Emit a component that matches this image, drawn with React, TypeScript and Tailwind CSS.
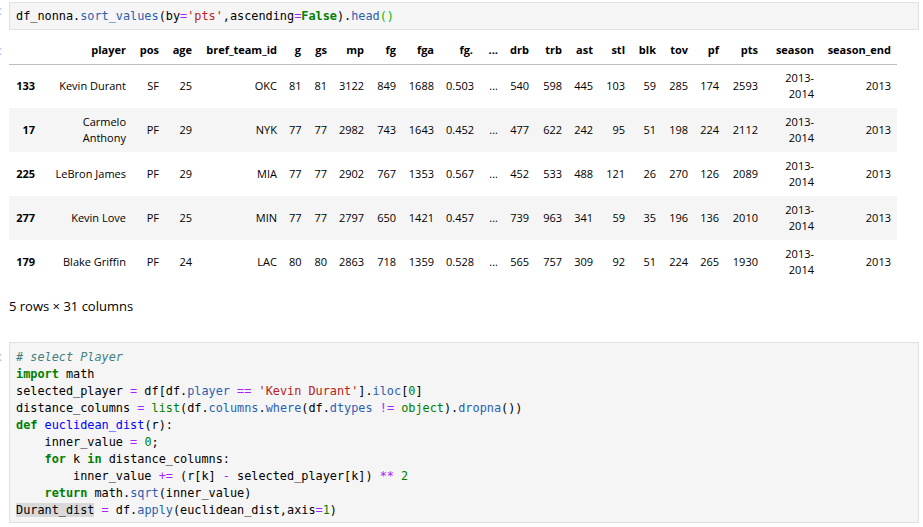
import React from 'react';

const mono = { fontFamily: '"DejaVu Sans Mono", "Liberation Mono", monospace' };

// token helpers for the highlighted code
const Kw = ({ children }: { children: React.ReactNode }) => <span className="font-bold text-[#008000]">{children}</span>;
const Op = ({ children }: { children: React.ReactNode }) => <span className="text-[#aa22ff]">{children}</span>;
const Str = ({ children }: { children: React.ReactNode }) => <span className="text-[#ba2121]">{children}</span>;
const Num = ({ children }: { children: React.ReactNode }) => <span className="text-[#008000]">{children}</span>;
const Prop = ({ children }: { children: React.ReactNode }) => <span className="text-[#2b5fb0]">{children}</span>;
const Def = ({ children }: { children: React.ReactNode }) => <span className="text-[#0000ff]">{children}</span>;

const Prompt = () => (
  <div className="w-[9px] shrink-0 overflow-hidden text-[12px] leading-[17px] text-[#9ec5ea]">
    <span className="-ml-[1px]">:</span>
  </div>
);

const columns = [
  { name: '', w: 'w-[32px]' },
  { name: 'player', w: 'w-[91px]' },
  { name: 'pos', w: 'w-[33px]' },
  { name: 'age', w: 'w-[33px]' },
  { name: 'bref_team_id', w: 'w-[85px]' },
  { name: 'g', w: 'w-[24px]' },
  { name: 'gs', w: 'w-[26px]' },
  { name: 'mp', w: 'w-[37px]' },
  { name: 'fg', w: 'w-[32px]' },
  { name: 'fga', w: 'w-[38px]' },
  { name: 'fg.', w: 'w-[39px]' },
  { name: '...', w: 'w-[25px]' },
  { name: 'drb', w: 'w-[31px]' },
  { name: 'trb', w: 'w-[33px]' },
  { name: 'ast', w: 'w-[31px]' },
  { name: 'stl', w: 'w-[32px]' },
  { name: 'blk', w: 'w-[31px]' },
  { name: 'tov', w: 'w-[32px]' },
  { name: 'pf', w: 'w-[31px]' },
  { name: 'pts', w: 'w-[39px]' },
  { name: 'season', w: 'w-[56px]' },
  { name: 'season_end', w: 'w-[77px]' },
];

const rows = [
  ['133', 'Kevin Durant', 'SF', '25', 'OKC', '81', '81', '3122', '849', '1688', '0.503', '...', '540', '598', '445', '103', '59', '285', '174', '2593', '2013-2014', '2013'],
  ['17', 'Carmelo Anthony', 'PF', '29', 'NYK', '77', '77', '2982', '743', '1643', '0.452', '...', '477', '622', '242', '95', '51', '198', '224', '2112', '2013-2014', '2013'],
  ['225', 'LeBron James', 'PF', '29', 'MIA', '77', '77', '2902', '767', '1353', '0.567', '...', '452', '533', '488', '121', '26', '270', '126', '2089', '2013-2014', '2013'],
  ['277', 'Kevin Love', 'PF', '25', 'MIN', '77', '77', '2797', '650', '1421', '0.457', '...', '739', '963', '341', '59', '35', '196', '136', '2010', '2013-2014', '2013'],
  ['179', 'Blake Griffin', 'PF', '24', 'LAC', '80', '80', '2863', '718', '1359', '0.528', '...', '565', '757', '309', '92', '51', '224', '265', '1930', '2013-2014', '2013'],
];

export default function App() {
  return (
    <div className="w-[923px] h-[527px] overflow-hidden bg-white pt-[2px] text-black" style={{ fontFamily: '"Open Sans", "Noto Sans", sans-serif' }}>
      {/* first input cell */}
      <div className="flex">
        <Prompt />
        <div
          className="mr-[4px] flex-1 border border-[#e0e0e0] bg-[#f5f5f5] pl-[6px] pt-[5px] pb-[4px] text-[11.85px] leading-[17px] whitespace-pre text-black"
          style={mono}
        >
          df_nonna.<Prop>sort_values</Prop>(by<Op>=</Op><Str>'pts'</Str>,ascending<Op>=</Op><Kw>False</Kw>).<Prop>head</Prop>
          <span className="text-[#00bb00]">()</span>
        </div>
      </div>

      {/* dataframe output */}
      <div className="mt-[7px] flex">
        <div className="w-[9px] shrink-0 overflow-hidden pt-[5px] text-[12px] leading-[17px] text-[#9ec5ea]">
          <span className="-ml-[1px]">:</span>
        </div>
        <div>
          <table className="w-[888px] table-fixed text-[11px]">
            <colgroup>
              {columns.map((c, i) => (
                <col key={i} className={c.w} />
              ))}
            </colgroup>
            <thead>
              <tr className="h-[27px] border-b border-[#bdbdbd]">
                {columns.map((c, i) => (
                  <th key={i} className="px-[6px] text-right align-middle font-bold leading-[16px]">
                    {c.name}
                  </th>
                ))}
              </tr>
            </thead>
            <tbody>
              {rows.map((r, ri) => (
                <tr key={ri} className={`h-[44px] ${ri % 2 === 1 ? 'bg-[#f5f5f5]' : 'bg-white'}`}>
                  {r.map((v, ci) => (
                    <td
                      key={ci}
                      className={`px-[6px] text-right align-middle leading-[16px] ${ci === 0 ? 'font-bold' : ''}`}
                    >
                      {v}
                    </td>
                  ))}
                </tr>
              ))}
            </tbody>
          </table>
          <div className="mt-[14px] text-[13px] leading-[17px]">5 rows × 31 columns</div>
        </div>
      </div>

      {/* second input cell */}
      <div className="mt-[27px] flex">
        <div className="w-[9px] shrink-0 overflow-hidden pt-[6px] text-[12px] leading-[17px] text-[#9ec5ea]">
          <span className="-ml-[1px]">:</span>
        </div>
        <div
          className="mr-[4px] flex-1 border border-[#e0e0e0] bg-[#f5f5f5] pl-[6px] pt-[6px] pb-[3px] text-[11.85px] leading-[17px] whitespace-pre text-black"
          style={mono}
        >
          <div className="italic text-[#408080]"># select Player</div>
          <div>
            <Kw>import</Kw> math
          </div>
          <div>
            selected_player <Op>=</Op> df[df.<Prop>player</Prop> <Op>==</Op> <Str>'Kevin Durant'</Str>].<Prop>iloc</Prop>[<Num>0</Num>]
          </div>
          <div>
            distance_columns <Op>=</Op> <Num>list</Num>(df.<Prop>columns</Prop>.<Prop>where</Prop>(df.<Prop>dtypes</Prop> <Op>!=</Op> <Num>object</Num>).<Prop>dropna</Prop>())
          </div>
          <div>
            <Kw>def</Kw> <Def>euclidean_dist</Def>(r):
          </div>
          <div>
            {'    '}inner_value <Op>=</Op> <Num>0</Num>;
          </div>
          <div>
            {'    '}<Kw>for</Kw> k <Kw>in</Kw> distance_columns:
          </div>
          <div>
            {'        '}inner_value <Op>+=</Op> (r[k] <Op>-</Op> selected_player[k]) <Op>**</Op> <Num>2</Num>
          </div>
          <div>
            {'    '}<Kw>return</Kw> math.<Prop>sqrt</Prop>(inner_value)
          </div>
          <div>
            <span className="bg-[#d9d9d9]">Durant_dist</span> <Op>=</Op> df.<Prop>apply</Prop>(euclidean_dist,axis<Op>=</Op><Num>1</Num>)
          </div>
        </div>
      </div>
    </div>
  );
}
